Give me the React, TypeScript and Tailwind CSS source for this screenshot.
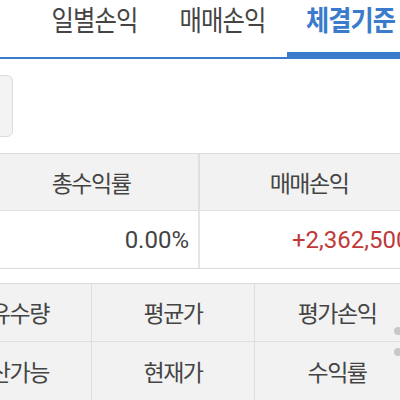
import React from "react";

const font = { fontFamily: '"Noto Sans CJK KR", "Noto Sans", Roboto, sans-serif' };
const num = { fontFamily: 'Roboto, "Noto Sans", sans-serif' };

export default function App() {
  return (
    <div
      className="w-[400px] h-[400px] overflow-hidden bg-white relative text-[#3c3c3c]"
      style={font}
    >
      {/* Tabs */}
      <div className="flex h-[59px] border-b-2 border-[#3a7bcc] pl-[31px]">
        <div className="w-[128px] shrink-0 h-full flex justify-center text-[28px] leading-[38px] tracking-[-1px] text-[#444]">
          <span className="inline-block scale-x-[0.87]">일별손익</span>
        </div>
        <div className="w-[128px] shrink-0 h-full flex justify-center text-[28px] leading-[38px] tracking-[-1px] text-[#444]">
          <span className="inline-block scale-x-[0.87]">매매손익</span>
        </div>
        <div className="w-[128px] shrink-0 h-full flex justify-center text-[28px] leading-[38px] tracking-[-1px] font-bold text-[#3a7bcc] border-b-[5px] border-[#3a7bcc]">
          <span className="inline-block scale-x-[0.9]">체결기준</span>
        </div>
      </div>

      {/* Button row */}
      <div className="h-[94px] pt-[16px] flex">
        <div className="ml-[-20px] w-[33px] h-[62px] rounded-[6px] border border-[#dcdcdc] bg-[#f3f3f3]" />
      </div>

      {/* Summary table */}
      <div className="ml-[-16px] w-[434px] border-t border-b border-[#dcdcdc]">
        <div className="flex h-[57px] bg-[#f2f2f2] border-b border-[#e2e2e2] text-[23px] tracking-[-1.5px] text-[#444]">
          <div className="w-[216px] flex items-center justify-center border-r-2 border-[#e0e0e0]">총수익률</div>
          <div className="flex-1 flex items-center justify-center">매매손익</div>
        </div>
        <div className="flex h-[57px] text-[24px]" style={num}>
          <div className="w-[216px] flex items-center justify-end pr-[9px] border-r-2 border-[#e6e6e6] text-[#444]">0.00%</div>
          <div className="flex-1 flex items-center pl-[92px] text-[#c0393b]">+2,362,500</div>
        </div>
      </div>

      {/* Detail header table */}
      <div className="mt-[14px] ml-[-72px] w-[500px] border-t border-[#dcdcdc] bg-[#f2f2f2] text-[23px] tracking-[-1.5px] text-[#444]">
        <div className="flex h-[58px] border-b border-[#e0e0e0]">
          <div className="w-[164px] shrink-0 flex items-center justify-center border-r border-[#dedede]">보유수량</div>
          <div className="w-[163px] shrink-0 flex items-center justify-center border-r border-[#dedede]">평균가</div>
          <div className="w-[164px] shrink-0 flex items-center justify-center">평가손익</div>
        </div>
        <div className="flex h-[58px]">
          <div className="w-[164px] shrink-0 flex items-center justify-center border-r border-[#dedede]">청산가능</div>
          <div className="w-[163px] shrink-0 flex items-center justify-center border-r border-[#dedede]">현재가</div>
          <div className="w-[164px] shrink-0 flex items-center justify-center">수익률</div>
        </div>
      </div>

      {/* scroll indicator dots */}
      <div className="absolute left-[394px] top-[327px] w-[8px] h-[8px] rounded-full bg-[#c8c8c8]" />
      <div className="absolute left-[394px] top-[348px] w-[8px] h-[8px] rounded-full bg-[#c8c8c8]" />
    </div>
  );
}
